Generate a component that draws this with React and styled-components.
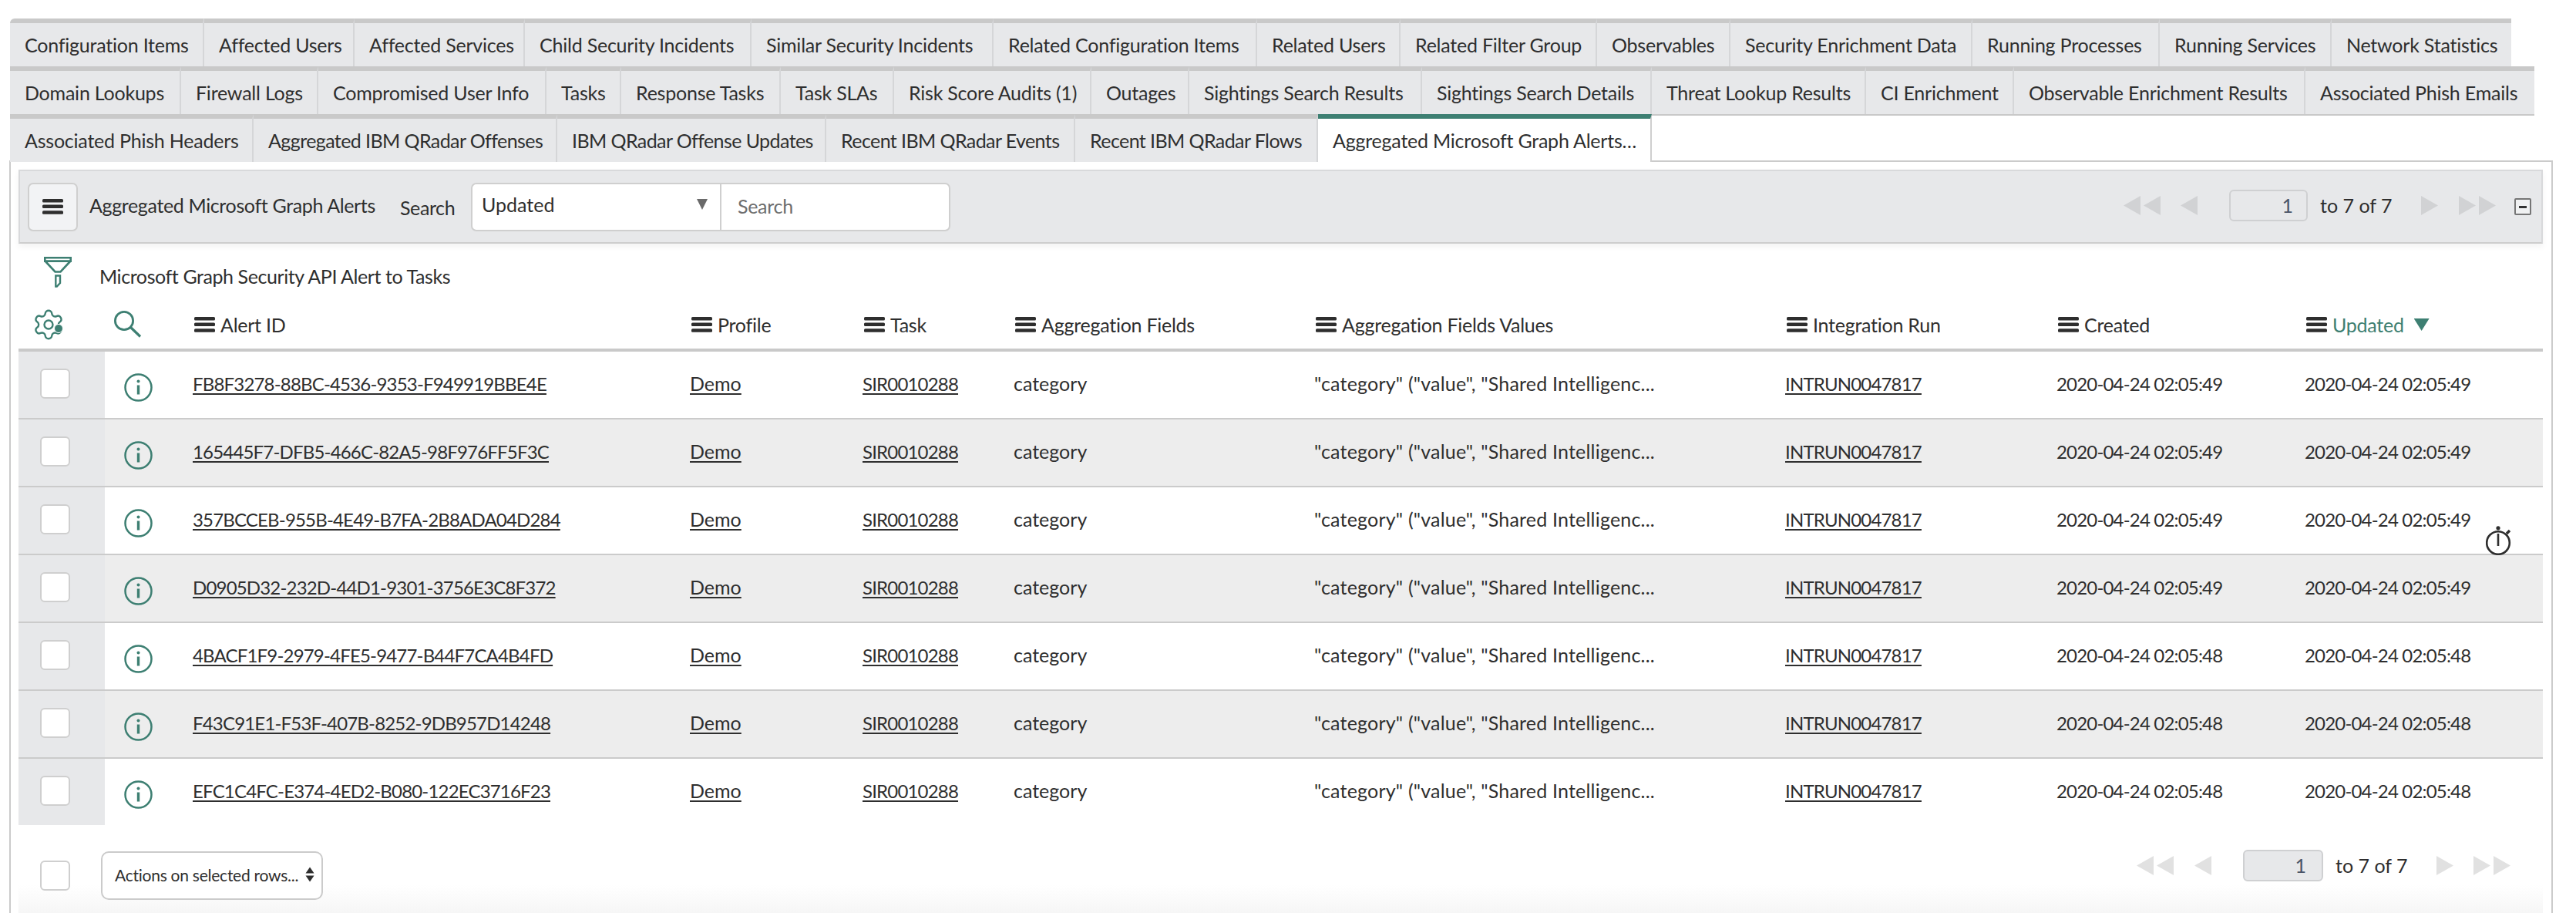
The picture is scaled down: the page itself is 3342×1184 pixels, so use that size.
import React from 'react';
import styled, { createGlobalStyle } from 'styled-components';
import { Settings } from 'lucide-react';

const GlobalStyle = createGlobalStyle`
    html, body {
        margin: 0;
        padding: 0;
        background: #fff;
    }
    body {
        width: 3342px;
        height: 1184px;
        overflow: hidden;
        font-family: Lato, "Noto Sans", sans-serif;
        font-size: 25px;
        color: #2e2e2e;
    }
    * {
        box-sizing: border-box;
    }
`;

const GREEN = '#3d7f72';

const Page = styled.div`
    width: 3342px;
    height: 1184px;
    padding: 24px 0 0 12px;
`;

const TabRows = styled.div`
    position: relative;
    z-index: 1;
    margin-left: 1px;
`;

const TabRow = styled.div`
    display: flex;
    align-items: flex-start;
    height: 62px;
`;

const Tab = styled.div`
    flex: 0 0 ${p => p.$w}px;
    min-width: 0;
    height: 62px;
    padding-left: 19px;
    display: flex;
    align-items: center;
    white-space: nowrap;
    letter-spacing: ${p => (p.$tight ? '-0.58px' : '-0.22px')};
    background: ${p => (p.$active ? '#fff' : '#e7e8ea')};
    border-top: 6px solid ${p => (p.$active ? GREEN : '#c9c9c9')};
    border-right: 2px solid ${p => (p.$active ? '#cfcfcf' : '#d5d6d8')};
    border-top-left-radius: ${p => (p.$round ? '6px' : '0')};
    &:last-child {
        border-right: 0;
    }
`;

const TabFiller = styled.div`
    flex: 0 0 1145px;
    height: 2px;
    background: #c9c9c9;
`;

const Panel = styled.div`
    position: relative;
    width: 3300px;
    height: 976px;
    margin-top: -2px;
    padding: 10px 11px 0 10px;
    border: 2px solid #cbcbcb;
    border-bottom: 0;
`;

const Toolbar = styled.div`
    display: flex;
    align-items: center;
    height: 96px;
    padding: 0 13px 0 10px;
    background: #e7e8ea;
    border: 2px solid #d8d9db;
    border-bottom-color: #cdcdcd;
    box-shadow: 0 4px 8px rgba(0, 0, 0, 0.05);
`;

const MenuButton = styled.div`
    flex: none;
    width: 65px;
    height: 63px;
    display: flex;
    align-items: center;
    justify-content: center;
    background: #f2f3f5;
    border: 2px solid #cfcfcf;
    border-radius: 7px;
`;

const ToolbarTitle = styled.div`
    flex: none;
    width: 403px;
    margin-left: 15px;
    padding-bottom: 5px;
    white-space: nowrap;
    letter-spacing: -0.36px;
`;

const SearchLabel = styled.div`
    flex: none;
    width: 92px;
    padding-top: 2px;
    letter-spacing: -0.4px;
`;

const SearchSelect = styled.div`
    flex: none;
    width: 324px;
    height: 63px;
    padding: 0 15px 6px 12px;
    display: flex;
    align-items: center;
    justify-content: space-between;
    background: #fff;
    border: 2px solid #cfcfcf;
    border-right-width: 1px;
    border-radius: 7px 0 0 7px;
`;

const SearchInput = styled.input`
    flex: none;
    width: 298px;
    height: 63px;
    padding: 0 0 3px 21px;
    font: inherit;
    letter-spacing: -0.3px;
    background: #fff;
    border: 2px solid #cfcfcf;
    border-left-width: 1px;
    border-radius: 0 7px 7px 0;
    outline: none;
    &::placeholder {
        color: #6e6e6e;
        opacity: 1;
    }
`;

const Pager = styled.div`
    margin-left: auto;
    display: flex;
    align-items: center;
`;

const ToolbarPager = styled(Pager)`
    padding-bottom: 3px;
`;

const ArrowGroup = styled.div`
    display: flex;
    gap: 4px;
    margin-left: ${p => p.$ml || 0}px;
`;

const Arrow = styled.svg`
    display: block;
    width: 22px;
    height: 25px;
    fill: ${p => p.$color};
`;

const PageInput = styled.input`
    flex: none;
    width: ${p => p.$w}px;
    height: 41px;
    margin-left: ${p => p.$ml}px;
    padding: 0 ${p => p.$pr}px 2px 0;
    text-align: right;
    font: inherit;
    color: #4a5568;
    background: #e7e8ea;
    border: 2px solid #cfd0d2;
    border-radius: 6px;
    outline: none;
`;

const PageText = styled.div`
    flex: none;
    width: 91px;
    margin-left: 16px;
    padding-bottom: 2px;
    white-space: nowrap;
`;

const CollapseButton = styled.div`
    flex: none;
    width: 22px;
    height: 22px;
    margin: 3px 0 0 24px;
    display: flex;
    align-items: center;
    justify-content: center;
    background: #f0f1f2;
    border: 2px solid #767676;
    border-radius: 2px;
    &::after {
        content: '';
        width: 10px;
        height: 3px;
        background: #333;
    }
`;

const FilterRow = styled.div`
    display: flex;
    align-items: flex-start;
    height: 81px;
    padding: 17px 0 0 33px;
`;

const FilterText = styled.div`
    margin: 5px 0 0 36px;
    line-height: 40px;
    letter-spacing: -0.42px;
`;

const COLUMNS = '112px 114px 645px 224px 196px 390px 611px 352px 322px 309px';

const HeaderRow = styled.div`
    display: grid;
    grid-template-columns: ${COLUMNS};
    align-items: center;
    height: 59px;
    padding-bottom: 7px;
    border-bottom: 4px solid #c9c9c9;
`;

const HeaderIcon = styled.div`
    padding-left: ${p => p.$pl}px;
    display: flex;
    align-items: center;
`;

const HeaderCell = styled.div`
    display: flex;
    align-items: center;
    gap: 7px;
    padding-left: 2px;
    white-space: nowrap;
    letter-spacing: -0.25px;
    color: ${p => (p.$sorted ? GREEN : 'inherit')};
`;

const SortArrow = styled.span`
    width: 20px;
    height: 16px;
    margin-left: 6px;
    background: ${GREEN};
    clip-path: polygon(0 0, 100% 0, 50% 100%);
`;

const Row = styled.div`
    display: grid;
    grid-template-columns: ${COLUMNS};
    align-items: center;
    height: ${p => (p.$last ? 86 : 88)}px;
    background: ${p => (p.$alt ? '#ededed' : '#fff')};
    border-bottom: ${p => (p.$last ? '0' : '2px solid #cbcbcb')};
`;

const CheckCell = styled.div`
    align-self: stretch;
    display: flex;
    align-items: center;
    padding: 0 0 3px 28px;
    background: #e7e8ea;
`;

const CheckBox = styled.div`
    flex: none;
    width: 39px;
    height: 39px;
    background: #fff;
    border: 2px solid #cfcfcf;
    border-radius: 6px;
`;

const InfoCell = styled.div`
    padding: 6px 0 0 25px;
    display: flex;
`;

const Cell = styled.div`
    white-space: nowrap;
    padding-bottom: 4px;
    font-size: ${p => (p.$digits ? 24 : 25)}px;
    letter-spacing: ${p => (p.$digits ? '-0.82px' : p.$wide ? '0.2px' : '0')};
`;

const CellLink = styled.span`
    text-decoration: underline;
    text-underline-offset: 3px;
    text-decoration-thickness: 2px;
`;

const Timer = styled.svg`
    position: absolute;
    top: 472px;
    right: 51px;
    width: 34px;
    height: 38px;
    color: #2e2e2e;
`;

const Footer = styled.div`
    display: flex;
    align-items: flex-start;
    height: 114px;
    padding-right: 42px;
    background: linear-gradient(to bottom, #fff 68%, #f6f6f6 100%);
`;

const FooterCheck = styled.div`
    margin: 46px 0 0 28px;
`;

const ActionSelect = styled.div`
    flex: none;
    width: 288px;
    height: 63px;
    margin: 34px 0 0 40px;
    padding: 0 9px 3px 16px;
    display: flex;
    align-items: center;
    justify-content: space-between;
    font-size: 21px;
    letter-spacing: -0.25px;
    white-space: nowrap;
    background: #fff;
    border: 2px solid #cbcbcb;
    border-radius: 10px;
`;

const FooterPager = styled(Pager)`
    margin-top: 32px;
`;

const GearBox = styled.div`
    position: relative;
    width: 38px;
    height: 36px;
`;

const GearIcon = styled(Settings)`
    position: absolute;
    left: -4px;
    top: -4px;
`;

const GearDot = styled.span`
    position: absolute;
    left: 25px;
    top: 17px;
    width: 12px;
    height: 12px;
    border-radius: 50%;
    background: ${GREEN};
    border: 1.5px solid #fff;
`;

const Burger = () => (
    <svg width="27" height="20" viewBox="0 0 27 20" fill="#2e2e2e">
        <rect x="0" y="0" width="27" height="4.6" rx="1.6" />
        <rect x="0" y="7.5" width="27" height="4.6" rx="1.6" />
        <rect x="0" y="15.2" width="27" height="4.6" rx="1.6" />
    </svg>
);

const Funnel = () => (
    <svg width="36" height="40" viewBox="0 0 36 40" fill="none" stroke={GREEN} strokeWidth="2.6">
        <path d="M1.3 1.3H34.7V5.6H1.3Z" />
        <path d="M2 6L14.5 19.5H21.5L34 6" />
        <path d="M15.3 24.5H21V34L16.8 38.5H15.3Z" strokeWidth="2.4" />
    </svg>
);

const Gear = () => (
    <GearBox>
        <GearIcon size={44} color={GREEN} strokeWidth={1.3} />
        <GearDot />
    </GearBox>
);

const Lens = () => (
    <svg width="36" height="36" viewBox="0 0 36 36" fill="none" stroke={GREEN} strokeWidth="2.8">
        <circle cx="13" cy="13" r="11.6" />
        <path d="M21.5 21.5L34 33.5" strokeWidth="3.2" />
    </svg>
);

const Info = () => (
    <svg width="37" height="37" viewBox="0 0 37 37" fill="none" stroke={GREEN}>
        <circle cx="18.5" cy="18.5" r="17" strokeWidth="2.5" />
        <circle cx="18.5" cy="10.5" r="2" fill={GREEN} stroke="none" />
        <path d="M18.5 15.5V27.5" strokeWidth="3.4" />
    </svg>
);

const Triangle = ({ dir, color }) => (
    <Arrow $color={color} viewBox="0 0 22 25">
        <path d={dir === 'left' ? 'M22 0V25L0 12.5Z' : 'M0 0V25L22 12.5Z'} />
    </Arrow>
);

const SelectCaret = () => (
    <svg width="16" height="16" viewBox="0 0 16 16" fill="#6a6a6a">
        <path d="M1 1H15L8 15Z" />
    </svg>
);

const UpDown = () => (
    <svg width="12" height="20" viewBox="0 0 12 20" fill="#2e2e2e" style={{ flex: 'none' }}>
        <path d="M6 0.5L11.5 8.5H0.5Z" />
        <path d="M0.5 11.5H11.5L6 19.5Z" />
    </svg>
);

const firstRow = [
    ['Configuration Items', 252], ['Affected Users', 195], ['Affected Services', 221],
    ['Child Security Incidents', 294], ['Similar Security Incidents', 314],
    ['Related Configuration Items', 342], ['Related Users', 186], ['Related Filter Group', 255],
    ['Observables', 173], ['Security Enrichment Data', 314], ['Running Processes', 243],
    ['Running Services', 223], ['Network Statistics', 233],
];

const secondRow = [
    ['Domain Lookups', 222], ['Firewall Logs', 178], ['Compromised User Info', 296], ['Tasks', 97],
    ['Response Tasks', 207], ['Task SLAs', 147], ['Risk Score Audits (1)', 256], ['Outages', 127],
    ['Sightings Search Results', 302], ['Sightings Search Details', 298], ['Threat Lookup Results', 278],
    ['CI Enrichment', 192], ['Observable Enrichment Results', 378], ['Associated Phish Emails', 297],
];

const thirdRow = [
    ['Associated Phish Headers', 316], ['Aggregated IBM QRadar Offenses', 394],
    ['IBM QRadar Offense Updates', 349], ['Recent IBM QRadar Events', 323],
    ['Recent IBM QRadar Flows', 315],
];

const columns = [
    'Alert ID', 'Profile', 'Task', 'Aggregation Fields', 'Aggregation Fields Values',
    'Integration Run', 'Created',
];

const alerts = [
    ['FB8F3278-88BC-4536-9353-F949919BBE4E', '02:05:49'],
    ['165445F7-DFB5-466C-82A5-98F976FF5F3C', '02:05:49'],
    ['357BCCEB-955B-4E49-B7FA-2B8ADA04D284', '02:05:49'],
    ['D0905D32-232D-44D1-9301-3756E3C8F372', '02:05:49'],
    ['4BACF1F9-2979-4FE5-9477-B44F7CA4B4FD', '02:05:48'],
    ['F43C91E1-F53F-407B-8252-9DB957D14248', '02:05:48'],
    ['EFC1C4FC-E374-4ED2-B080-122EC3716F23', '02:05:48'],
];

const Pagination = ({ color, inputWidth, inputPr, gaps }) => (
    <>
        <ArrowGroup>
            <Triangle dir="left" color={color} />
            <Triangle dir="left" color={color} />
        </ArrowGroup>
        <ArrowGroup $ml={gaps[0]}>
            <Triangle dir="left" color={color} />
        </ArrowGroup>
        <PageInput readOnly value="1" $w={inputWidth} $pr={inputPr} $ml={gaps[1]} />
        <PageText>to 7 of 7</PageText>
        <ArrowGroup $ml={gaps[2]}>
            <Triangle dir="right" color={color} />
        </ArrowGroup>
        <ArrowGroup $ml={gaps[3]}>
            <Triangle dir="right" color={color} />
            <Triangle dir="right" color={color} />
        </ArrowGroup>
    </>
);

const App = () => {
    return (
        <Page>
            <GlobalStyle />
            <TabRows>
                <TabRow>
                    {firstRow.map(([name, w], i) => <Tab key={name} $w={w} $round={i === 0}>{name}</Tab>)}
                </TabRow>
                <TabRow>
                    {secondRow.map(([name, w]) => <Tab key={name} $w={w}>{name}</Tab>)}
                </TabRow>
                <TabRow>
                    {thirdRow.map(([name, w]) => (
                        <Tab key={name} $w={w} $tight={name.includes('QRadar')}>{name}</Tab>
                    ))}
                    <Tab $w={433} $active>Aggregated Microsoft Graph Alerts…</Tab>
                    <TabFiller />
                </TabRow>
            </TabRows>
            <Panel>
                <Toolbar>
                    <MenuButton><Burger /></MenuButton>
                    <ToolbarTitle>Aggregated Microsoft Graph Alerts</ToolbarTitle>
                    <SearchLabel>Search</SearchLabel>
                    <SearchSelect>Updated<SelectCaret /></SearchSelect>
                    <SearchInput placeholder="Search" />
                    <ToolbarPager>
                        <Pagination color="#d1d2d4" inputWidth={102} inputPr={17} gaps={[26, 41, 40, 27]} />
                        <CollapseButton />
                    </ToolbarPager>
                </Toolbar>
                <FilterRow>
                    <Funnel />
                    <FilterText>Microsoft Graph Security API Alert to Tasks</FilterText>
                </FilterRow>
                <HeaderRow>
                    <HeaderIcon $pl={21}><Gear /></HeaderIcon>
                    <HeaderIcon $pl={12}><Lens /></HeaderIcon>
                    {columns.map(name => (
                        <HeaderCell key={name}><Burger />{name}</HeaderCell>
                    ))}
                    <HeaderCell $sorted><Burger />Updated<SortArrow /></HeaderCell>
                </HeaderRow>
                {alerts.map(([id, time], i) => (
                    <Row key={id} $alt={i % 2 === 1} $last={i === alerts.length - 1}>
                        <CheckCell><CheckBox /></CheckCell>
                        <InfoCell><Info /></InfoCell>
                        <Cell $digits><CellLink>{id}</CellLink></Cell>
                        <Cell><CellLink>Demo</CellLink></Cell>
                        <Cell $digits><CellLink>SIR0010288</CellLink></Cell>
                        <Cell>category</Cell>
                        <Cell $wide>"category" ("value", "Shared Intelligenc...</Cell>
                        <Cell $digits><CellLink>INTRUN0047817</CellLink></Cell>
                        <Cell $digits>2020-04-24 {time}</Cell>
                        <Cell $digits>2020-04-24 {time}</Cell>
                    </Row>
                ))}
                <Footer>
                    <FooterCheck><CheckBox /></FooterCheck>
                    <ActionSelect>Actions on selected rows...<UpDown /></ActionSelect>
                    <FooterPager>
                        <Pagination color="#e1e1e1" inputWidth={104} inputPr={20} gaps={[27, 41, 40, 26]} />
                    </FooterPager>
                </Footer>
                <Timer viewBox="0 0 34 38" fill="none" stroke="currentColor">
                    <circle cx="16" cy="22" r="14.8" strokeWidth="2.6" />
                    <circle cx="16" cy="2.8" r="2.6" fill="currentColor" stroke="none" />
                    <path d="M16 10V26" strokeWidth="2.6" />
                    <path d="M27 10L31 6" strokeWidth="3.4" />
                </Timer>
            </Panel>
        </Page>
    );
};

export default App;
